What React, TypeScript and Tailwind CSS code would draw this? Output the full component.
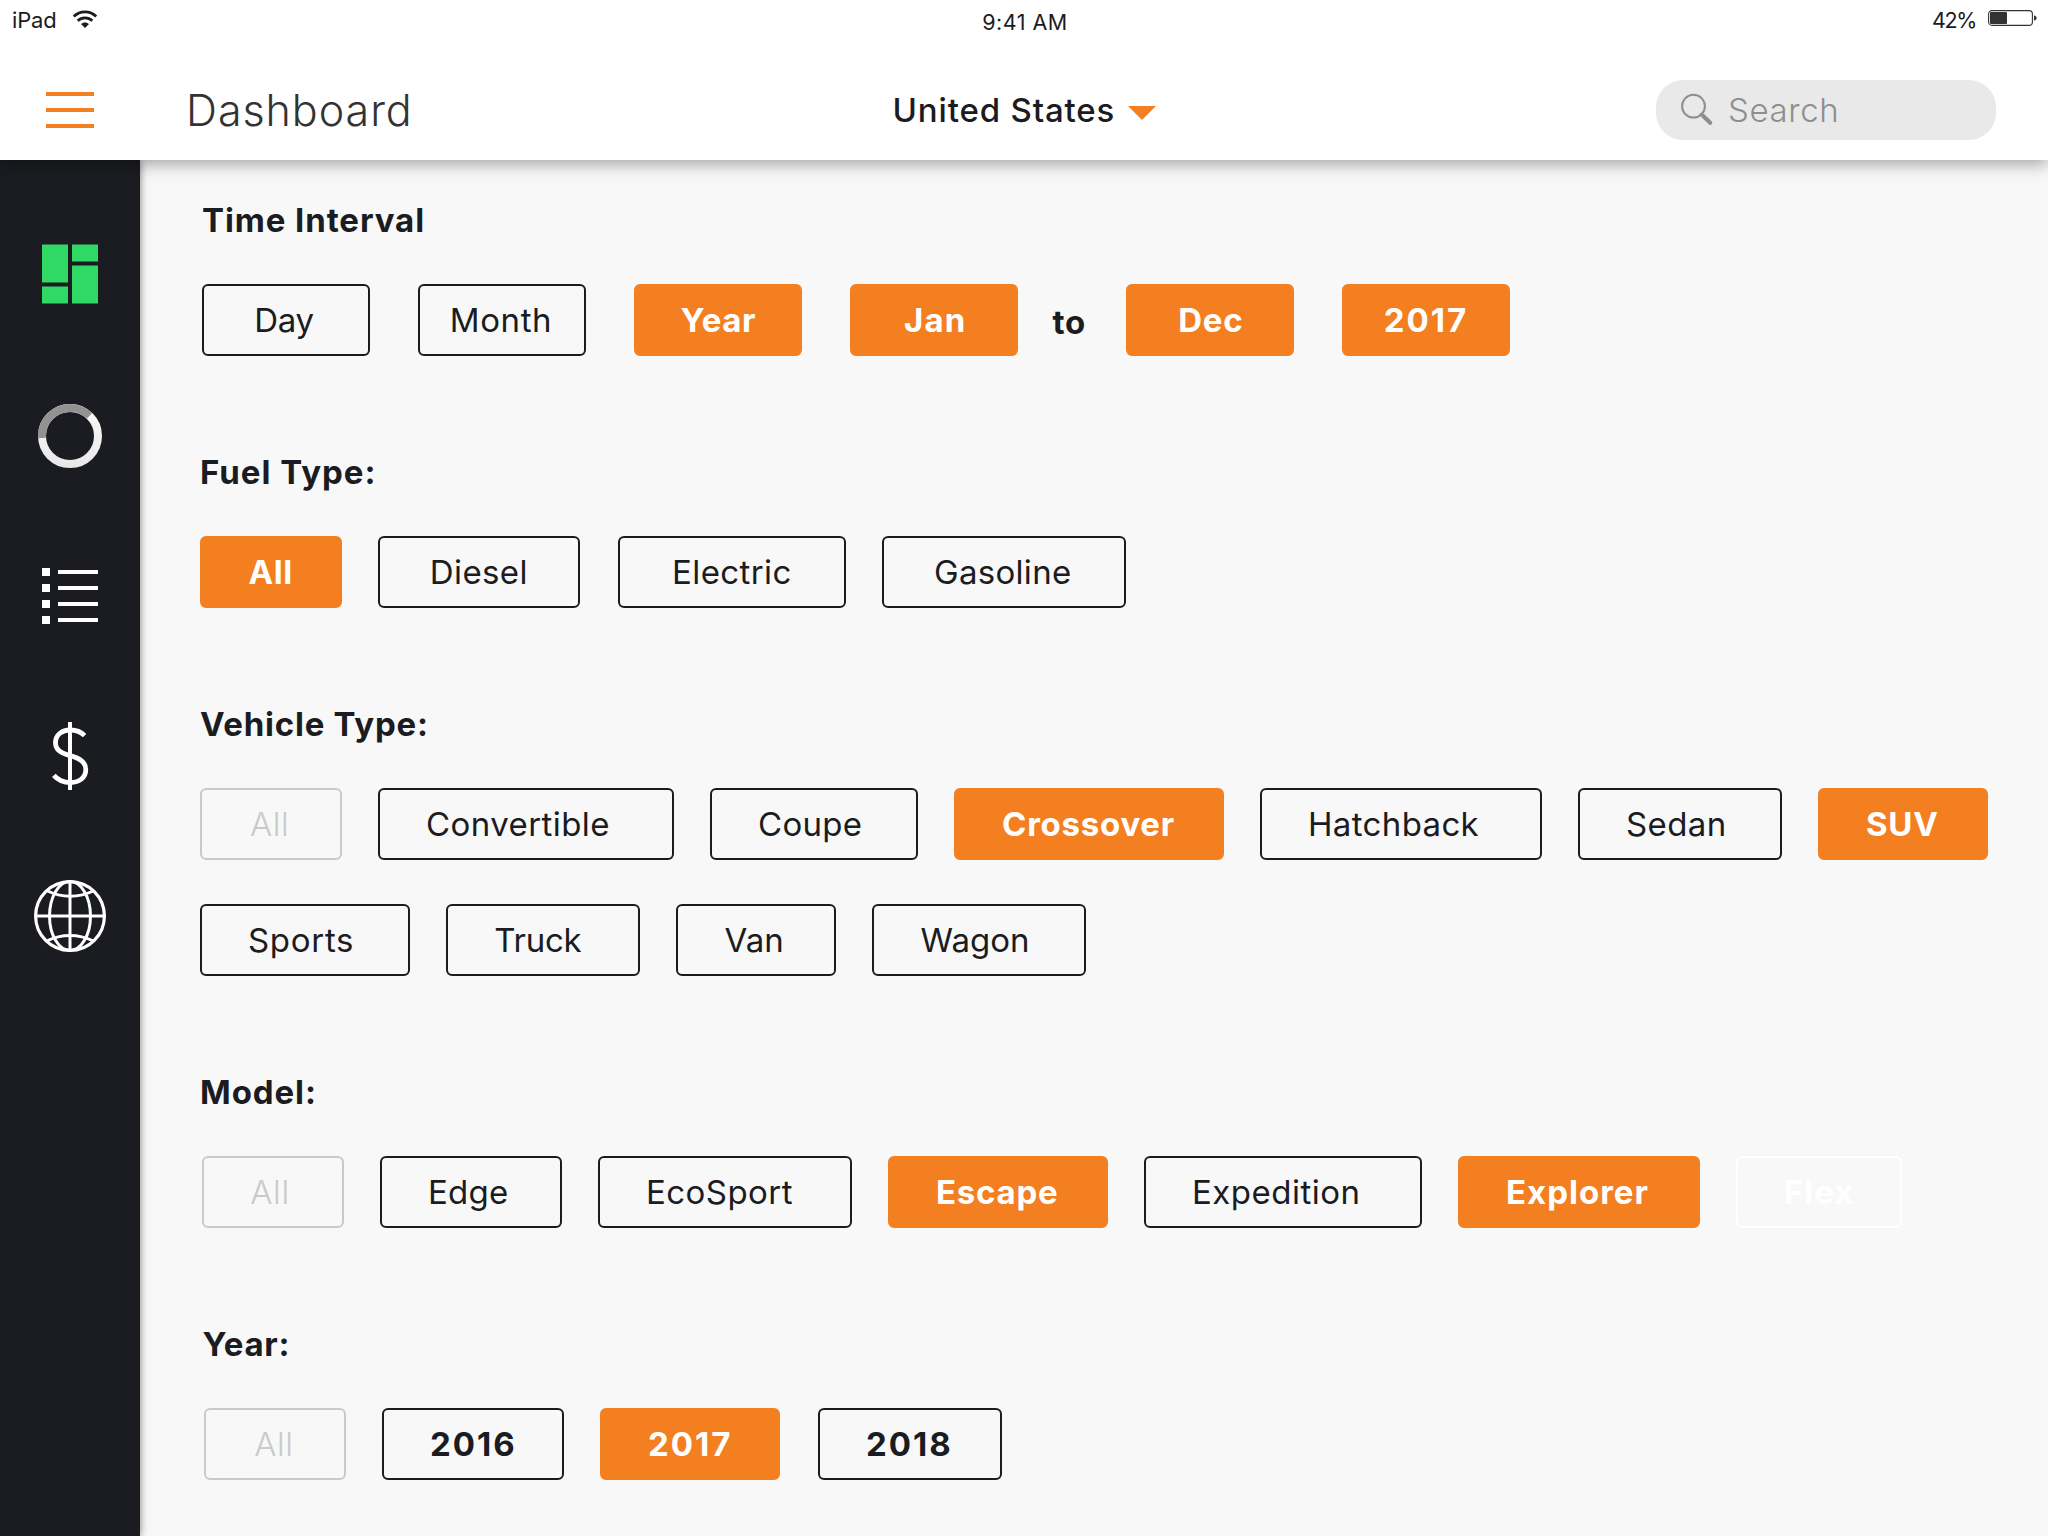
import React from 'react';

type Variant = 'outline' | 'selected' | 'muted' | 'ghost' | 'strong';
type ChipData = { label: string; variant?: Variant; className: string };

const variants: Record<Variant, string> = {
  outline: 'border-[#1b1c21] text-[#1b1c21] font-normal',
  selected: 'border-[#f47f20] bg-[#f47f20] text-white font-bold',
  muted: 'border-[#cacaca] text-[#cacaca] font-[350]',
  ghost: 'border-white text-white font-bold',
  strong: 'border-[#1b1c21] text-[#1b1c21] font-bold',
};

function Chip({ label, variant = 'outline', className }: ChipData) {
  return (
    <button
      type="button"
      className={`flex h-[72px] shrink-0 items-center whitespace-nowrap rounded-[6px] border-2 text-[33px] leading-[40px] ${variants[variant]} ${className}`}
    >
      {label}
    </button>
  );
}

function Chips({ items, className }: { items: ChipData[]; className: string }) {
  return (
    <div className={`flex ${className}`}>
      {items.map((c) => (
        <Chip key={c.label} {...c} />
      ))}
    </div>
  );
}

function Heading({ children, className }: { children: React.ReactNode; className: string }) {
  return <h2 className={`mb-11 text-[33px] font-bold leading-[40px] ${className}`}>{children}</h2>;
}

const intervalUnits: ChipData[] = [
  { label: 'Day', className: 'w-[168px] pl-[50.2px] tracking-[-0.3px]' },
  { label: 'Month', className: 'w-[168px] pl-[29.8px] tracking-[0.6px]' },
  { label: 'Year', variant: 'selected', className: 'w-[168px] pl-[44.6px] tracking-[0.6px]' },
  { label: 'Jan', variant: 'selected', className: 'w-[168px] pl-[52px] tracking-[1.2px]' },
];

const intervalEnd: ChipData[] = [
  { label: 'Dec', variant: 'selected', className: 'w-[168px] pl-[50.2px] tracking-[0.8px]' },
  { label: '2017', variant: 'selected', className: 'w-[168px] pl-[39.8px] tracking-[2px]' },
];

const fuelTypes: ChipData[] = [
  { label: 'All', variant: 'selected', className: 'w-[142px] pl-[46.6px] tracking-[0.5px]' },
  { label: 'Diesel', className: 'w-[202px] pl-[49.8px] tracking-[0.4px]' },
  { label: 'Electric', className: 'ml-[2px] w-[228px] pl-[52px] tracking-[0.4px]' },
  { label: 'Gasoline', className: 'w-[244px] pl-[50px] tracking-[0.3px]' },
];

const vehicleTypes: ChipData[] = [
  { label: 'All', variant: 'muted', className: 'w-[142px] pl-[48px] tracking-[0.6px]' },
  { label: 'Convertible', className: 'w-[296px] pl-[46px] tracking-[0.42px]' },
  { label: 'Coupe', className: 'w-[208px] pl-[46px] tracking-[0.3px]' },
  { label: 'Crossover', variant: 'selected', className: 'w-[270px] pl-[46px] tracking-[0.75px]' },
  { label: 'Hatchback', className: 'w-[282px] pl-[46px] tracking-[0.35px]' },
  { label: 'Sedan', className: 'w-[204px] pl-[46px] tracking-[0.4px]' },
  { label: 'SUV', variant: 'selected', className: 'w-[170px] pl-[46px] tracking-[0.7px]' },
];

const moreVehicleTypes: ChipData[] = [
  { label: 'Sports', className: 'w-[210px] pl-[46px] tracking-[0.7px]' },
  { label: 'Truck', className: 'w-[194px] pl-[46.2px] tracking-[-0.2px]' },
  { label: 'Van', className: 'w-[160px] pl-[46.6px] tracking-[0px]' },
  { label: 'Wagon', className: 'w-[214px] pl-[46.6px] tracking-[0px]' },
];

const models: ChipData[] = [
  { label: 'All', variant: 'muted', className: 'w-[142px] pl-[46.3px] tracking-[0.6px]' },
  { label: 'Edge', className: 'w-[182px] pl-[46px] tracking-[0.2px]' },
  { label: 'EcoSport', className: 'w-[254px] pl-[46px] tracking-[0.45px]' },
  { label: 'Escape', variant: 'selected', className: 'w-[220px] pl-[46px] tracking-[0.75px]' },
  { label: 'Expedition', className: 'w-[278px] pl-[46px] tracking-[0.5px]' },
  { label: 'Explorer', variant: 'selected', className: 'w-[242px] pl-[46px] tracking-[1px]' },
  { label: 'Flex', variant: 'ghost', className: 'w-[166px] pl-[46px] tracking-[1px]' },
];

const years: ChipData[] = [
  { label: 'All', variant: 'muted', className: 'w-[142px] pl-[48.2px] tracking-[0.6px]' },
  { label: '2016', variant: 'strong', className: 'w-[182px] pl-[46px] tracking-[2px]' },
  { label: '2017', variant: 'selected', className: 'w-[180px] pl-[46px] tracking-[2px]' },
  { label: '2018', variant: 'strong', className: 'ml-[2px] w-[184px] pl-[46px] tracking-[2px]' },
];

function WifiIcon() {
  return (
    <svg width="26" height="20" viewBox="0 0 26 20" fill="none" stroke="#1b1c21">
      <path d="M1.8 7.6 C8 1.4 18 1.4 24.2 7.6" strokeWidth="2.8" />
      <path d="M5.7 11.8 C9.8 7.9 16.2 7.9 20.3 11.8" strokeWidth="2.6" />
      <path d="M9 15 C11.2 12.9 14.8 12.9 17 15 L13 19 Z" fill="#1b1c21" stroke="none" />
    </svg>
  );
}

function BatteryIcon() {
  return (
    <svg width="50" height="16" viewBox="0 0 50 16">
      <rect x="0.6" y="0.6" width="43.8" height="14.8" rx="3.4" fill="white" stroke="#333" strokeWidth="1.1" />
      <rect x="2" y="2" width="17" height="12" rx="1" fill="#333" />
      <path d="M46 5.2 L48.2 6.4 Q49 8 48.2 9.6 L46 10.8 Z" fill="#333" />
    </svg>
  );
}

function SearchIcon() {
  return (
    <svg width="34" height="34" viewBox="0 0 34 34" fill="none" stroke="#8e8e8e" strokeLinecap="round">
      <circle cx="13.5" cy="13.2" r="11.4" strokeWidth="2" />
      <path d="M21 20.8 L23.4 23.2" strokeWidth="2.2" />
      <path d="M23.2 23 L30.2 29.8" strokeWidth="4.2" />
    </svg>
  );
}

function NavIcon({ children }: { children: React.ReactNode }) {
  return (
    <a className="flex h-40 items-center justify-center">
      <svg width="72" height="72" viewBox="-36 -36 72 72" fill="none">
        {children}
      </svg>
    </a>
  );
}

function Sidebar() {
  return (
    <nav className="z-10 w-[140px] shrink-0 bg-[#1b1c21] pt-9 shadow-[0_0_8px_rgba(0,0,0,0.5)]">
      <NavIcon>
        <g fill="#2fd964">
          <rect x="-28" y="-31.5" width="26" height="38" />
          <rect x="-28" y="10.5" width="26" height="17" />
          <rect x="2" y="-31.5" width="26" height="17" />
          <rect x="2" y="-10.5" width="26" height="38" />
        </g>
      </NavIcon>
      <NavIcon>
        <defs>
          <linearGradient id="ring" x1="0" y1="-32" x2="0" y2="32" gradientUnits="userSpaceOnUse">
            <stop offset="0" stopColor="#fafafa" />
            <stop offset="1" stopColor="#e8e8e8" />
          </linearGradient>
        </defs>
        <circle r="28" stroke="url(#ring)" strokeWidth="8" />
        <path d="M-27.93 1.9 A28 28 0 0 1 19.5 -20.1" stroke="#929292" strokeWidth="8" />
      </NavIcon>
      <NavIcon>
        <g fill="white">
          {[-28, -12, 4, 20].map((y) => (
            <React.Fragment key={y}>
              <rect x="-28" y={y} width="8" height="8" />
              <rect x="-12" y={y + 2} width="40" height="4" />
            </React.Fragment>
          ))}
        </g>
      </NavIcon>
      <NavIcon>
        <path d="M0 -34 V34" stroke="white" strokeWidth="4" />
        <path
          d="M14.6 -20.4 C11 -24 6.5 -26 0.5 -26 C-8.5 -26 -14.5 -21 -14.5 -13.3 C-14.5 -6 -9 -2.8 0 -0.4 C10 2.4 15.8 6 15.8 13.5 C15.8 21.5 9.5 26.5 0.5 26.5 C-6.5 26.5 -12 24.2 -16.2 19.4"
          stroke="white"
          strokeWidth="4.8"
        />
      </NavIcon>
      <NavIcon>
        <g stroke="white" strokeWidth="3">
          <circle r="34.4" strokeWidth="3.2" />
          <ellipse rx="20.5" ry="34.4" />
          <path d="M0 -34 V34 M-34 0 H34" />
          <path d="M-23.5 -25.5 Q0 -14 24.5 -25.5 M-23.5 25 Q0 14 23.5 25" />
        </g>
      </NavIcon>
    </nav>
  );
}

function Header() {
  return (
    <header className="z-20 h-40 shrink-0 bg-white shadow-[0_4px_16px_rgba(0,0,0,0.35)]">
      <div className="flex h-[60px] items-start text-[22px] leading-[28px] text-[#1b1c21]">
        <div className="flex w-[982.2px] gap-[15.5px] pl-[12px] pt-[6px]">
          <span className="tracking-[-0.2px]">iPad</span>
          <div className="pt-[2.5px]">
            <WifiIcon />
          </div>
        </div>
        <span className="pt-2 text-[21.5px] tracking-[0.5px]">9:41 AM</span>
        <div className="ml-auto flex pr-[10px] pt-[6px]">
          <span className="w-[56px] text-[21.5px] tracking-[-1.4px]">42%</span>
          <div className="pt-[4px]">
            <BatteryIcon />
          </div>
        </div>
      </div>
      <div className="flex h-[100px] items-center">
        <button type="button" className="flex w-[140px] flex-col items-center gap-3">
          <span className="h-1 w-12 bg-[#f47f20]" />
          <span className="h-1 w-12 bg-[#f47f20]" />
          <span className="h-1 w-12 bg-[#f47f20]" />
        </button>
        <h1 className="ml-[46px] w-[706.5px] text-[43px] font-[330] leading-[52px] tracking-[0.95px] text-[#333]">
          Dashboard
        </h1>
        <button type="button" className="flex items-center">
          <span className="w-[235.5px] text-left text-[33px] font-medium leading-[40px] tracking-[0.85px] text-[#1b1c21]">
            United States
          </span>
          <svg width="28" height="14" viewBox="0 0 28 14" className="mt-[6px]">
            <path d="M0 0 H28 L14 14 Z" fill="#f47f20" />
          </svg>
        </button>
        <div className="ml-auto mr-[52px] flex h-[60px] w-[340px] items-center rounded-[27px] bg-[#e9e9e9] pl-6">
          <SearchIcon />
          <span className="ml-[14px] text-[33px] font-[330] leading-[40px] tracking-[0.6px] text-[#8e8e8e]">
            Search
          </span>
        </div>
      </div>
    </header>
  );
}

export default function App() {
  return (
    <div className="flex h-[1536px] w-[2048px] flex-col overflow-hidden bg-[#f8f8f8] font-['Inter',sans-serif]">
      <Header />
      <div className="flex flex-1">
        <Sidebar />
        <main className="flex flex-1 flex-col gap-24 pl-[60px] pt-10 text-[#1b1c21]">
          <section>
            <Heading className="ml-[2px] tracking-[0.9px]">Time Interval</Heading>
            <div className="ml-[2px] flex items-center">
              <Chips items={intervalUnits} className="gap-12" />
              <span className="w-[108px] pl-[34.6px] pt-1 text-[33px] font-bold leading-[40px] tracking-[0.7px]">to</span>
              <Chips items={intervalEnd} className="gap-12" />
            </div>
          </section>
          <section>
            <Heading className="tracking-[1px]">Fuel Type:</Heading>
            <Chips items={fuelTypes} className="gap-9" />
          </section>
          <section>
            <Heading className="tracking-[0.75px]">Vehicle Type:</Heading>
            <div className="flex flex-col gap-11">
              <Chips items={vehicleTypes} className="gap-9" />
              <Chips items={moreVehicleTypes} className="gap-9" />
            </div>
          </section>
          <section>
            <Heading className="tracking-[0.9px]">Model:</Heading>
            <Chips items={models} className="ml-[2px] gap-9" />
          </section>
          <section>
            <Heading className="ml-[2.6px] tracking-[0.7px]">Year:</Heading>
            <Chips items={years} className="ml-1 gap-9" />
          </section>
        </main>
      </div>
    </div>
  );
}
